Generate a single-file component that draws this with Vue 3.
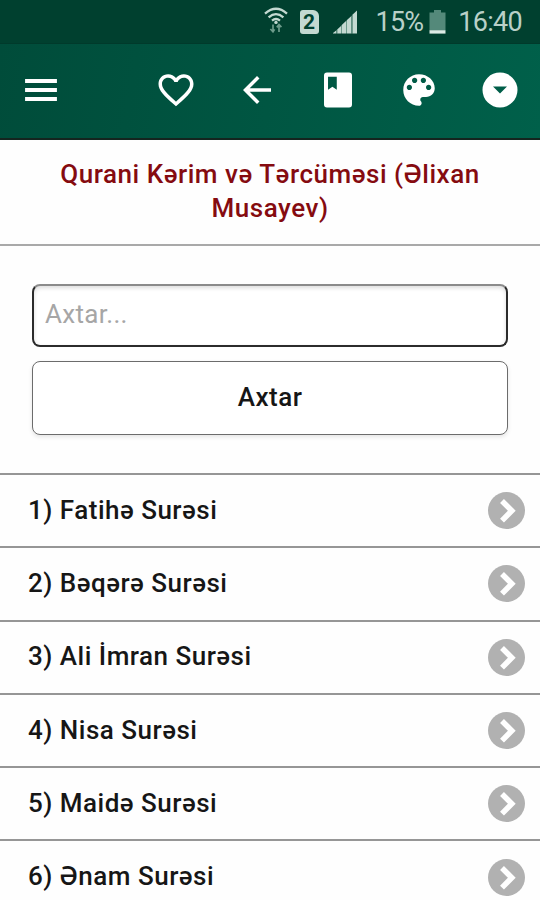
<template>
  <div class="app">
    <div class="status-bar">
      <svg class="wifi" width="24" height="26" viewBox="0 0 24 26">
        <g fill="none" stroke="#c3d9d1" stroke-width="2.3">
          <path d="M1 6.6Q12 -3 23 6.6" />
          <path d="M4.6 10.3Q12 4 19.4 10.3" />
          <path d="M8 13.6Q12 10.4 16 13.6" />
        </g>
        <circle cx="12" cy="15.4" r="1.7" fill="#c3d9d1" />
        <path d="M9 17.5v7M6.4 22L9 24.8l1.6-2.4M15 25v-7M12.8 20.4L15 17.6l2.4 2.6" fill="none" stroke="#6d9c8c" stroke-width="1.7" />
      </svg>
      <span class="sim">2</span>
      <svg class="signal" width="24" height="24" viewBox="0 0 24 24">
        <path d="M0 23.5h3.2v-3L0 23zM4.2 23.5h3.8v-7.6L4.2 19.4zM9 23.5h4V11l-4 3.8zM14 23.5h4.4V6L14 10zM19.4 23.5H24V.6l-4.6 4.2z" fill="#c3d9d1" />
        <path d="M3.2 20.4l1-1v4h-1zM8 15.8l1-1v8.6H8zM13 11l1-1v13.4h-1zM18.4 6l1-1v18.4h-1z" fill="#6d9c8c" />
      </svg>
      <span class="percent">15%</span>
      <svg class="battery" width="17" height="24" viewBox="0 0 17 24">
        <path d="M5 0h7v2.5h4.5v17.7H.5V2.5H5z" fill="#54897a" />
        <path d="M.5 20.2h16v3.4H.5z" fill="#dcebe5" />
      </svg>
      <span class="time">16:40</span>
    </div>

    <header class="toolbar">
      <button class="icon-btn menu-btn" aria-label="Menu">
        <svg viewBox="0 0 24 24"><path d="M2.9 5.7h18.2v2.3H2.9zM2.9 10.85h18.2v2.3H2.9zM2.9 16h18.2v2.3H2.9z" /></svg>
      </button>
      <button v-for="icon in icons" :key="icon.name" class="icon-btn" :aria-label="icon.name">
        <svg viewBox="0 0 24 24"><path :d="icon.path" fill-rule="evenodd" /></svg>
      </button>
    </header>

    <h1 class="title">Qurani Kərim və Tərcüməsi (Əlixan Musayev)</h1>

    <form class="search" @submit.prevent>
      <input v-model="query" type="text" placeholder="Axtar...">
      <button type="submit">Axtar</button>
    </form>

    <ul class="surah-list">
      <li v-for="(surah, index) in filteredSurahs" :key="surah">
        <span>{{ index + 1 }}) {{ surah }} Surəsi</span>
        <svg class="chevron" width="37" height="37" viewBox="0 0 37 37">
          <circle cx="18.5" cy="18.5" r="18.5" fill="#b1b1b1" />
          <path d="M14 9L23.8 18.7L14 28.6" fill="none" stroke="#fff" stroke-width="5.5" />
        </svg>
      </li>
    </ul>
  </div>
</template>

<script setup>
import { ref, computed } from 'vue';

const query = ref('');

const surahs = ['Fatihə', 'Bəqərə', 'Ali İmran', 'Nisa', 'Maidə', 'Ənam'];

const filteredSurahs = computed(() =>
  surahs.filter((name) => name.toLowerCase().includes(query.value.toLowerCase()))
);

// toolbar icons, left to right
const icons = [
  {
    name: 'Favorites',
    path: 'M16.5 3c-1.74 0-3.41.81-4.5 2.09C10.91 3.81 9.24 3 7.5 3 4.42 3 2 5.42 2 8.5c0 3.78 3.4 6.86 8.55 11.54L12 21.35l1.45-1.32C18.6 15.36 22 12.28 22 8.5 22 5.42 19.58 3 16.5 3zm-4.4 15.55l-.1.1-.1-.1C7.14 14.24 4 11.39 4 8.5 4 6.5 5.5 5 7.5 5c1.54 0 3.04.99 3.57 2.36h1.87C13.46 5.99 14.96 5 16.5 5c2 0 3.5 1.5 3.5 3.5 0 2.89-3.14 5.74-7.9 10.05z'
  },
  {
    name: 'Back',
    path: 'M20 11H7.83l5.59-5.59L12 4l-8 8 8 8 1.41-1.41L7.83 13H20v-2z'
  },
  {
    name: 'Bookmarks',
    path: 'M5.7 2h12.6a1.7 1.7 0 0 1 1.7 1.7v16.6a1.7 1.7 0 0 1-1.7 1.7H5.7a1.7 1.7 0 0 1-1.7-1.7V3.7a1.7 1.7 0 0 1 1.7-1.7zM6.3 4.4v7.5l2.5-1.7 2.5 1.7V4.4z'
  },
  {
    name: 'Theme',
    path: 'M12 3c-4.97 0-9 4.03-9 9s4.03 9 9 9c.83 0 1.5-.67 1.5-1.5 0-.39-.15-.74-.39-1.01-.23-.26-.38-.61-.38-.99 0-.83.67-1.5 1.5-1.5H16c2.76 0 5-2.24 5-5 0-4.42-4.03-8-9-8zm-5.5 9c-.83 0-1.5-.67-1.5-1.5S5.67 9 6.5 9 8 9.67 8 10.5 7.33 12 6.5 12zm3-4C8.67 8 8 7.33 8 6.5S8.67 5 9.5 5s1.5.67 1.5 1.5S10.33 8 9.5 8zm5 0c-.83 0-1.5-.67-1.5-1.5S13.67 5 14.5 5s1.5.67 1.5 1.5S15.33 8 14.5 8zm3 4c-.83 0-1.5-.67-1.5-1.5S16.67 9 17.5 9s1.5.67 1.5 1.5-.67 1.5-1.5 1.5z'
  },
  {
    name: 'More',
    path: 'M12 2a10 10 0 1 0 0 20 10 10 0 0 0 0-20zM12 14l-4-4h8z'
  }
];
</script>

<style>
body {
  margin: 0;
  background: #fff;
}
</style>

<style scoped>
.app {
  height: 900px;
  overflow: hidden;
  background: #fefefe;
  color: #161616;
  font-family: Roboto, "Liberation Sans", sans-serif;
}

/* status bar */
.status-bar {
  display: flex;
  align-items: center;
  justify-content: flex-end;
  box-sizing: border-box;
  height: 43px;
  padding-right: 18px;
  background: #00402f;
  color: #b9d0c8;
  font-size: 27px;
}

.wifi {
  margin-right: 12px;
  margin-top: -4px;
}

.sim {
  width: 19px;
  height: 24px;
  margin-right: 14px;
  border-radius: 3px 6px 3px 3px;
  background: #c3d9d1;
  color: #00402f;
  font-size: 21px;
  font-weight: 700;
  line-height: 24px;
  text-align: center;
}

.signal {
  margin-right: 19px;
}

.percent {
  margin-right: 6px;
  letter-spacing: -0.8px;
}

.battery {
  margin-right: 12px;
}

.time {
  letter-spacing: -0.7px;
}

/* toolbar */
.toolbar {
  display: flex;
  align-items: center;
  gap: 39px;
  box-sizing: border-box;
  height: 97px;
  padding: 0 19px 2px 20px;
  border-top: 1px solid #003a2b;
  border-bottom: 2px solid #14251f;
  background: linear-gradient(100deg, #004c3a, #00604a);
}

.icon-btn {
  width: 42px;
  height: 42px;
  padding: 0;
  border: none;
  background: none;
}

.icon-btn svg {
  display: block;
  width: 42px;
  height: 42px;
  fill: #fff;
}

.menu-btn {
  margin-right: auto;
}

.title {
  box-sizing: border-box;
  height: 106px;
  margin: 0;
  padding: 17px 40px 0;
  border-bottom: 2px solid #a9a9a9;
  color: #850b10;
  font-size: 26px;
  font-weight: 500;
  line-height: 34px;
  letter-spacing: 0.55px;
  text-align: center;
}

/* search form */
.search {
  display: flex;
  flex-direction: column;
  gap: 14px;
  padding: 38px 32px 38px;
}

.search input,
.search button {
  box-sizing: border-box;
  width: 100%;
  border-radius: 8px;
  background: #fff;
  font-family: inherit;
  font-size: 26px;
}

.search input {
  height: 63px;
  padding: 0 11px 3px;
  border: 2px solid #2b2b2b;
  border-top-color: #8b8b8b;
  box-shadow: inset 0 2px 4px rgba(0, 0, 0, 0.14);
  letter-spacing: 0.3px;
  outline: none;
}

.search input::placeholder {
  color: #a6a6a6;
  opacity: 1;
}

.search button {
  height: 74px;
  padding: 0 0 2px;
  border: 1.5px solid #6c6c6c;
  box-shadow: 0 2px 4px rgba(0, 0, 0, 0.1);
  color: #161616;
  font-weight: 500;
  letter-spacing: 0.5px;
}

/* surah list */
.surah-list {
  margin: 0;
  padding: 0;
  list-style: none;
}

.surah-list li {
  display: flex;
  align-items: center;
  justify-content: space-between;
  box-sizing: border-box;
  height: 73.3px;
  padding: 0 15px 0 28px;
  border-top: 2px solid #969696;
  font-size: 26px;
  font-weight: 500;
  letter-spacing: 0.5px;
}

.surah-list span {
  padding-bottom: 2px;
}
</style>
